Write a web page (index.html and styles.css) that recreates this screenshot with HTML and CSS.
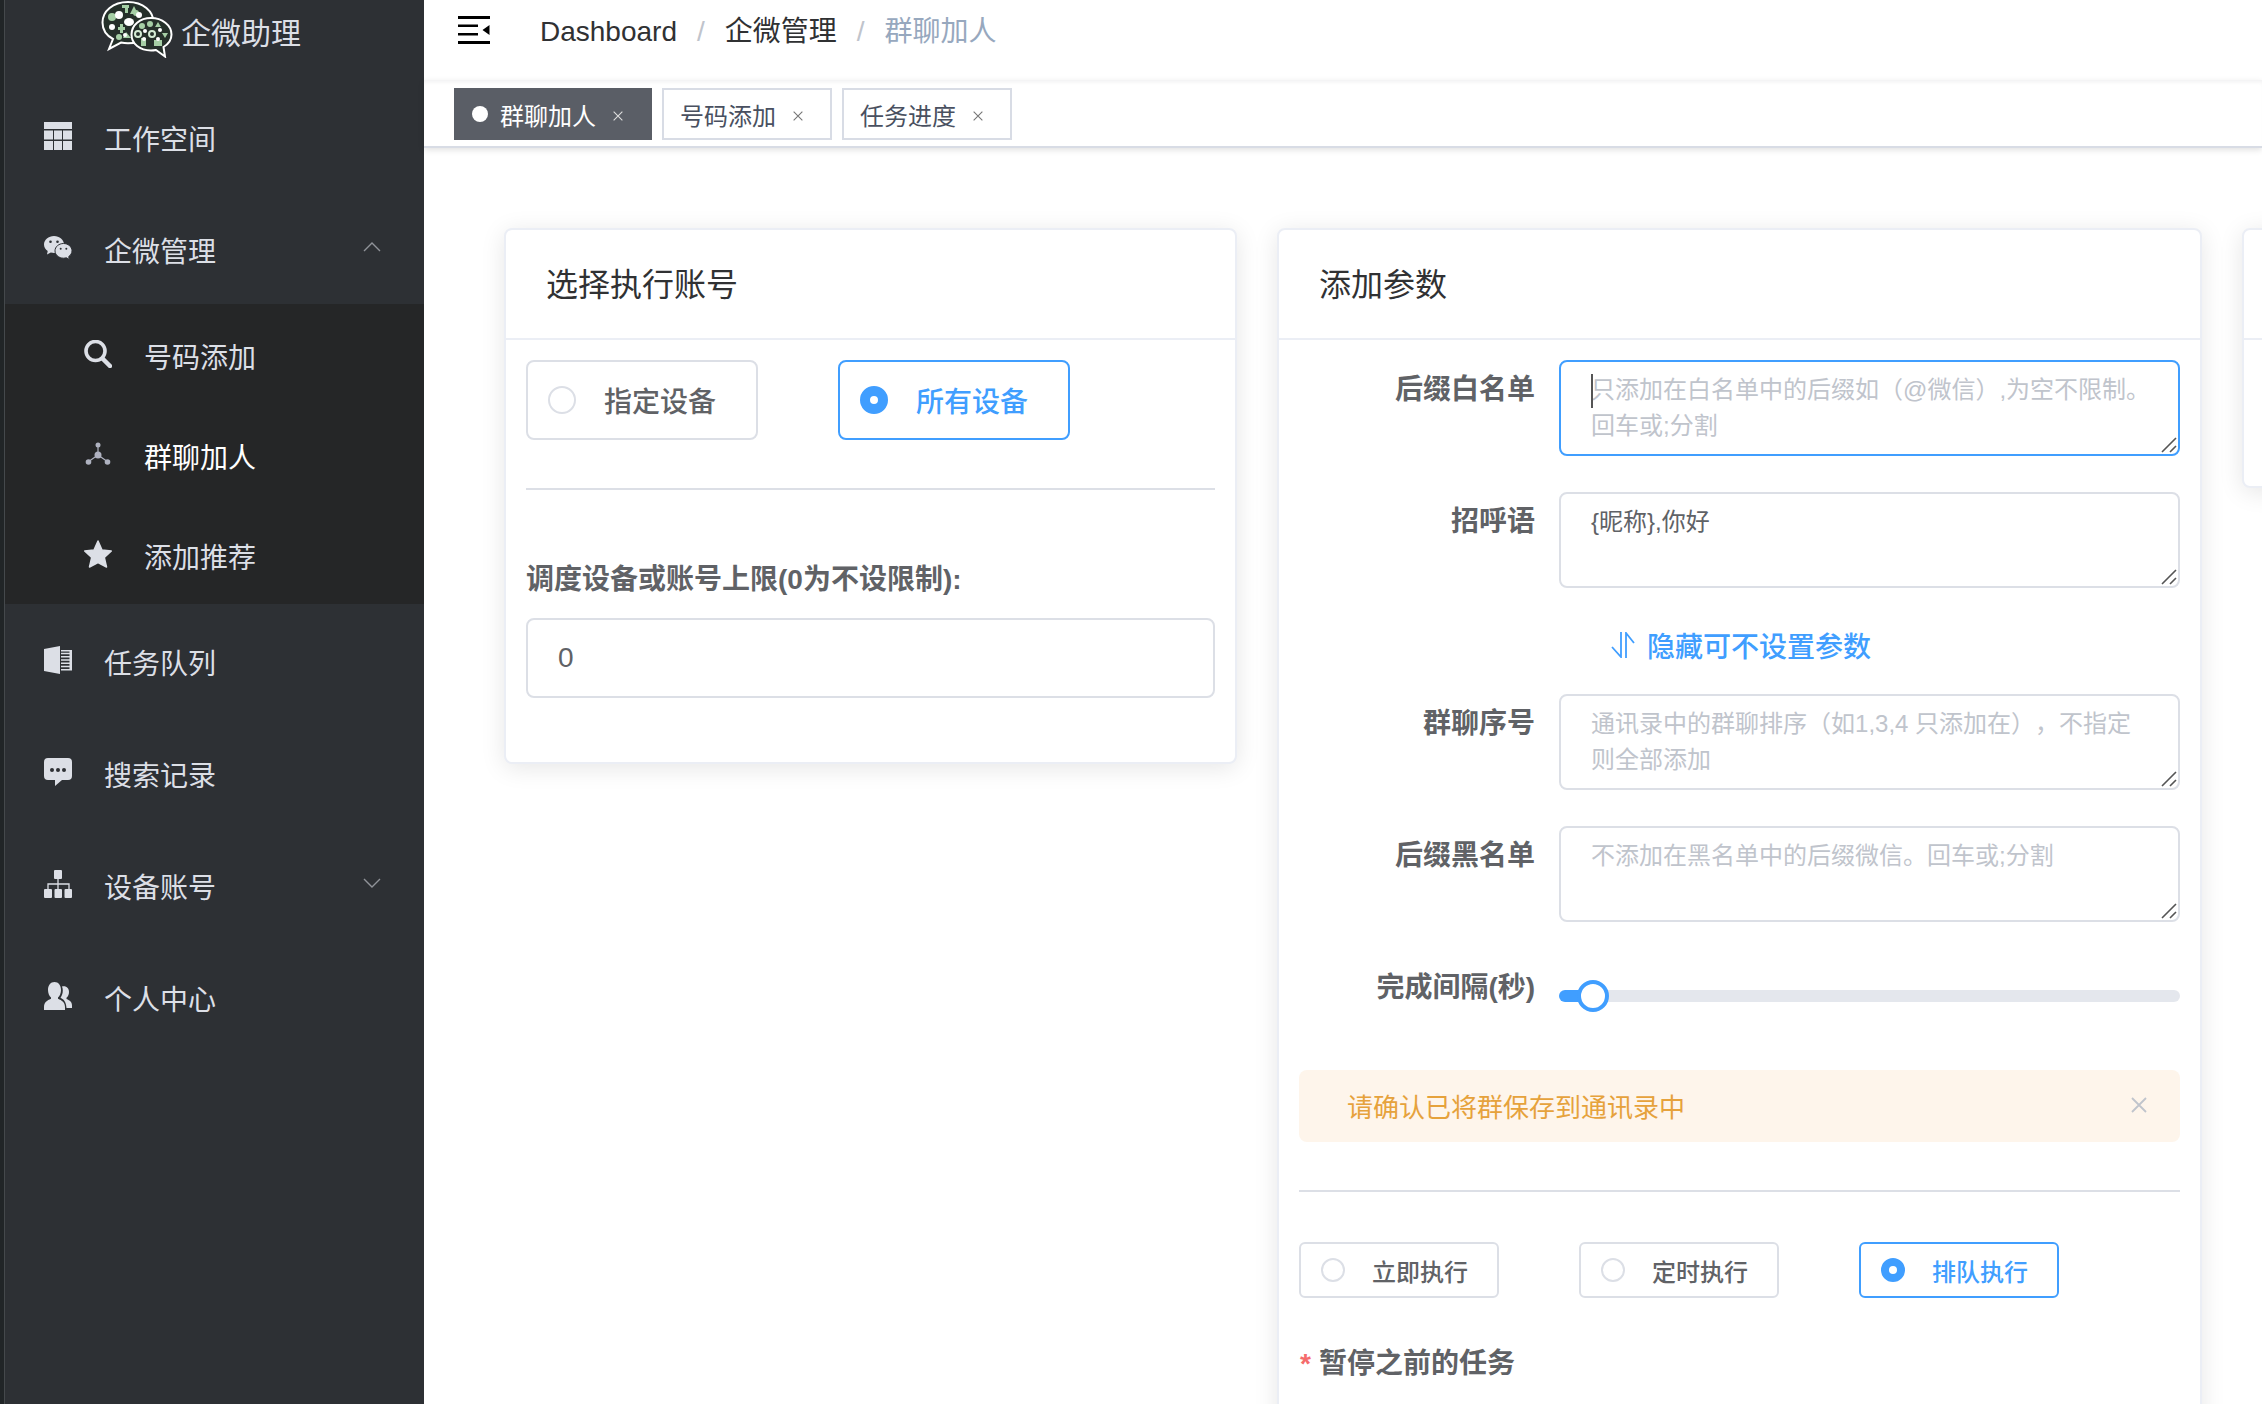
FILE: index.html
```
<!DOCTYPE html>
<html lang="zh-CN">
<head>
<meta charset="utf-8">
<meta name="viewport" content="width=device-width, initial-scale=1">
<title>群聊加人 - 企微助理</title>
<link rel="stylesheet" href="styles.css">
</head>
<body>
<svg class="sprite" width="0" height="0" aria-hidden="true">
  <symbol id="grip" viewBox="0 0 16 16"><path d="M1 15 15 1M9 15l6-6" fill="none" stroke="currentColor" stroke-width="1.6"/></symbol>
  <symbol id="cross" viewBox="0 0 16 16"><path d="M1 1l14 14M15 1 1 15" fill="none" stroke="currentColor" stroke-width="1.8"/></symbol>
  <symbol id="chevron" viewBox="0 0 18 10"><path d="M1 1l8 8 8-8" fill="none" stroke="currentColor" stroke-width="1.4"/></symbol>
</svg>
<div class="app">
  <aside class="sidebar">
    <a class="logo" href="#">
      <svg class="logo-mark" viewBox="0 0 72 58" aria-hidden="true">
        <path d="M27 2C12 2 1.500 11 1.500 22.500c0 7 4 13 10.500 16.500L8 49l12-6.500c2 .5 5 .8 7 .8 15 0 25.500-9.300 25.500-20.800S42 2 27 2z" fill="#25302a" stroke="#fff" stroke-width="2"/>
        <g fill="#a5cfa5"><rect x="21" y="5" width="7" height="3"/><rect x="24" y="5" width="3" height="8"/><path d="M33 6l4 8h-8z"/><circle cx="11" cy="17" r="4"/><circle cx="35" cy="13" r="3"/><rect x="17" y="27" width="7" height="3"/><rect x="19" y="24" width="3" height="9"/><circle cx="18" cy="37" r="3"/><path d="M25 32l5 6h-8z"/></g>
        <g fill="#fff"><circle cx="18" cy="15" r="4"/><circle cx="38" cy="15" r="3"/><ellipse cx="28" cy="22" rx="5" ry="4"/><circle cx="11" cy="27" r="3"/><circle cx="24" cy="35" r="2"/></g>
        <path d="M50 18c-11 0-19.500 7-19.500 16.500S39 50.500 50 50.500c1.500 0 3.500-.2 5-.5l9 6.500-1.500-9.500c5-3 8-7.500 8-12.500C70.500 25 61 18 50 18z" fill="#25302a" stroke="#fff" stroke-width="2"/>
        <g fill="#a5cfa5"><circle cx="41" cy="26" r="3"/><circle cx="49" cy="24" r="3"/><path d="M57 22l3 5h-6z"/><rect x="40" y="38" width="5" height="8"/><rect x="53" y="40" width="8" height="6"/><path d="M61 33h6l-3 5z"/></g>
        <g fill="none" stroke="#d4ebd4" stroke-width="2"><circle cx="37" cy="34" r="3"/><circle cx="51" cy="34" r="3"/></g>
        <g fill="#fff"><circle cx="44" cy="31" r="2"/><circle cx="59" cy="30" r="2"/><circle cx="43" cy="39" r="2"/><circle cx="57" cy="39" r="2"/></g>
      </svg>
      <span>企微助理</span>
    </a>
    <nav>
      <ul class="menu">
        <li><a class="menu-item" href="#">
          <svg class="icon" viewBox="0 0 28 28" fill="currentColor"><path d="M0 0h28v7H0zM0 8.500h9v9H0zM10 8.500h8v9h-8zM19 8.500h9v9h-9zM0 19h9v9H0zM10 19h8v9h-8zM19 19h9v9h-9z"/></svg>
          <span>工作空间</span></a></li>
        <li><a class="menu-item" href="#">
          <svg class="icon" viewBox="0 0 28 28"><path d="M10 2C4.500 2 0 5.700 0 10.500c0 2.700 1.500 5 3.700 6.500L3 20.500l3.800-2c1 .3 2.200.5 3.200.5 5.500 0 10-3.800 10-8.500S15.500 2 10 2z" fill="currentColor"/><path d="M19.500 9.500c-4.700 0-8.500 3.300-8.500 7.300s3.800 7.400 8.500 7.400c1 0 2-.2 2.900-.4l3 1.700-.7-2.900c2-1.400 3.300-3.400 3.300-5.800 0-4-3.800-7.300-8.500-7.300z" fill="currentColor" stroke="#2d3034"/><g fill="#2d3034"><circle cx="6.500" cy="7.700" r="1.300"/><circle cx="13.500" cy="7.700" r="1.300"/><circle cx="16.700" cy="14.700" r="1"/><circle cx="22.300" cy="14.700" r="1"/></g></svg>
          <span>企微管理</span>
          <svg class="arrow arrow-up"><use href="#chevron"/></svg></a>
          <ul class="submenu">
            <li><a class="menu-item" href="#">
              <svg class="icon" viewBox="0 0 28 28" fill="none" stroke="currentColor"><circle cx="11.500" cy="11" r="9.500" stroke-width="3.600"/><path d="M18.500 18.500l7.500 7.500" stroke-width="4.500" stroke-linecap="round"/></svg>
              <span>号码添加</span></a></li>
            <li><a class="menu-item active" href="#" aria-current="page">
              <svg class="icon" viewBox="0 0 28 28" fill="#afb2c0" stroke="#afb2c0"><path d="M14 5v10L4 22M14 15l10 7" fill="none" stroke-width="1.200"/><g stroke="none"><circle cx="14" cy="5" r="2.500"/><circle cx="14" cy="15" r="3.500"/><circle cx="4.500" cy="22" r="2.800"/><circle cx="23.500" cy="22" r="2.800"/></g></svg>
              <span>群聊加人</span></a></li>
            <li><a class="menu-item" href="#">
              <svg class="icon" viewBox="0 0 28 28" fill="currentColor" stroke="currentColor" stroke-width="1.500" stroke-linejoin="round"><path d="M14 1l4 9 9.300 1-7 6.500 2.200 9.500-8.500-4.500L5.500 27l2.200-9.500-7-6.500 9.300-1z"/></svg>
              <span>添加推荐</span></a></li>
          </ul></li>
        <li><a class="menu-item" href="#">
          <svg class="icon" viewBox="0 0 28 28" fill="currentColor"><path d="M0 3l16-3v28L0 25zM17 4h11v20.500H17v-1.500h8.500v-1.800H17v-1.500h8.500V18H17v-1.500h8.500v-1.700H17v-1.500h8.500v-1.800H17V10h8.500V8.300H17V6.800h8.500V5.500H17z"/></svg>
          <span>任务队列</span></a></li>
        <li><a class="menu-item" href="#">
          <svg class="icon" viewBox="0 0 28 28"><path d="M4 0h20a4 4 0 0 1 4 4v14a4 4 0 0 1-4 4h-6l-7 6v-6H4a4 4 0 0 1-4-4V4a4 4 0 0 1 4-4z" fill="currentColor"/><g fill="#2d3034"><circle cx="8" cy="12" r="2"/><circle cx="14" cy="12" r="2"/><circle cx="20" cy="12" r="2"/></g></svg>
          <span>搜索记录</span></a></li>
        <li><a class="menu-item" href="#">
          <svg class="icon" viewBox="0 0 28 28"><path d="M14 8v12M4 20v-6h21v6" fill="none" stroke="currentColor" stroke-width="1.300"/><g fill="currentColor"><rect x="10" width="8" height="9" rx="1"/><rect y="19" width="8" height="9" rx="1"/><rect x="10.500" y="19" width="7.500" height="9" rx="1"/><rect x="20.500" y="19" width="7.500" height="9" rx="1"/></g></svg>
          <span>设备账号</span>
          <svg class="arrow"><use href="#chevron"/></svg></a></li>
        <li><a class="menu-item" href="#">
          <svg class="icon" viewBox="0 0 28 28" fill="currentColor"><path d="M10.500 0C6.500 0 4 3.500 4 8c0 3.300 1.300 6 3 7.500v1.300C3 18.500 0 20.500 0 25v3h21v-3c0-4.500-3-6.500-7-8.200v-1.300c1.700-1.500 3-4.200 3-7.500 0-4.500-2.500-8-6.500-8z"/><path d="M18 4.500c.6 1.200.8 2.500.8 4 0 3-1 5.500-2.300 7.300 3.500 1.700 5.500 4 6 10.200H28v-2.500c0-3.500-2-5-5.500-6.500v-1.300c1.600-1.300 2.500-3 2.500-5.700 0-3.500-2.500-6.500-7-5.500z"/></svg>
          <span>个人中心</span></a></li>
      </ul>
    </nav>
  </aside>

  <div class="page">
    <header class="navbar">
      <button class="toggle" type="button" aria-label="收起菜单">
        <svg viewBox="0 0 32 28" fill="#000" aria-hidden="true"><path d="M0 0h32v3H0zM0 8.500h20v2.500H0zM0 17h20v2.500H0zM0 25h32v3H0zM31.500 9v10l-7-5z"/></svg>
      </button>
      <nav class="breadcrumb">
        <a href="#">Dashboard</a><span class="slash">/</span><a href="#">企微管理</a><span class="slash">/</span><span class="current">群聊加人</span>
      </nav>
    </header>
    <nav class="tags">
      <a class="tag tag-active" href="#">群聊加人<svg class="tag-close"><use href="#cross"/></svg></a>
      <a class="tag" href="#">号码添加<svg class="tag-close"><use href="#cross"/></svg></a>
      <a class="tag" href="#">任务进度<svg class="tag-close"><use href="#cross"/></svg></a>
    </nav>

    <main class="cards">
      <section class="card">
        <h2 class="card-title">选择执行账号</h2>
        <div class="card-body">
          <div class="radios">
            <label class="radio"><input type="radio" name="device"><span>指定设备</span></label>
            <label class="radio"><input type="radio" name="device" checked><span>所有设备</span></label>
          </div>
          <hr class="rule">
          <label class="limit-label" for="limit">调度设备或账号上限(0为不设限制):</label>
          <input class="text-input" id="limit" type="text" value="0">
        </div>
      </section>

      <section class="card card-tall">
        <h2 class="card-title">添加参数</h2>
        <form class="card-body">
          <div class="row">
            <label class="row-label" for="white">后缀白名单</label>
            <div class="field"><textarea class="area focused" id="white" placeholder="只添加在白名单中的后缀如（@微信）,为空不限制。回车或;分割"></textarea><span class="caret"></span><svg class="grip"><use href="#grip"/></svg></div>
          </div>
          <div class="row">
            <label class="row-label" for="greet">招呼语</label>
            <div class="field"><textarea class="area" id="greet">{昵称},你好</textarea><svg class="grip"><use href="#grip"/></svg></div>
          </div>
          <button class="fold" type="button">
            <svg viewBox="0 0 24 26" aria-hidden="true"><path d="M10 0v25L1 15M15 26V1l8 10" fill="none" stroke="currentColor" stroke-width="1.800"/></svg>隐藏可不设置参数</button>
          <div class="row">
            <label class="row-label" for="order">群聊序号</label>
            <div class="field"><textarea class="area" id="order" placeholder="通讯录中的群聊排序（如1,3,4 只添加在），不指定则全部添加"></textarea><svg class="grip"><use href="#grip"/></svg></div>
          </div>
          <div class="row">
            <label class="row-label" for="black">后缀黑名单</label>
            <div class="field"><textarea class="area" id="black" placeholder="不添加在黑名单中的后缀微信。回车或;分割"></textarea><svg class="grip"><use href="#grip"/></svg></div>
          </div>
          <div class="row">
            <label class="row-label" for="gap">完成间隔(秒)</label>
            <div class="field"><input class="slider" id="gap" type="range" min="0" max="100" value="3"></div>
          </div>
          <div class="alert" role="alert">
            <span>请确认已将群保存到通讯录中</span>
            <button class="alert-close" type="button" aria-label="关闭"><svg><use href="#cross"/></svg></button>
          </div>
          <hr class="rule">
          <div class="radios">
            <label class="radio radio-small"><input type="radio" name="run"><span>立即执行</span></label>
            <label class="radio radio-small"><input type="radio" name="run"><span>定时执行</span></label>
            <label class="radio radio-small"><input type="radio" name="run" checked><span>排队执行</span></label>
          </div>
          <p class="required">暂停之前的任务</p>
        </form>
      </section>

      <section class="card card-short">
        <div class="card-title"></div>
        <div class="card-body"></div>
      </section>
    </main>
  </div>
</div>
</body>
</html>
```
FILE: styles.css
```
* { box-sizing: border-box; }

body {
  margin: 0;
  background: #fff;
  color: #606266;
  font-family: "Liberation Sans", "Noto Sans CJK SC", sans-serif;
  font-size: 28px;
  text-spacing-trim: space-all;
}

a { color: inherit; text-decoration: none; }
ul { margin: 0; padding: 0; list-style: none; }
button { padding: 0; border: 0; background: none; color: inherit; font: inherit; cursor: pointer; }
textarea, input { font-family: inherit; }
.sprite { position: absolute; }

.app { display: flex; height: 100vh; overflow: hidden; }

/* Sidebar */
.sidebar {
  flex: 0 0 424px;
  border-left: 4px solid #212527;
  box-shadow: inset 1px 0 #45494c;
  background: #2d3034;
  color: #dcdfe6;
}
.logo {
  display: flex;
  gap: 8px;
  height: 80px;
  padding-left: 97px;
  font-size: 30px;
  line-height: 68px;
}
.logo-mark { width: 72px; height: 58px; }
.menu-item {
  display: flex;
  align-items: center;
  height: 112px;
  padding: 0 43px 0 40px;
}
.icon { flex: none; width: 28px; height: 28px; }
.menu-item span { margin-left: 32px; padding-top: 4px; }
.arrow { width: 18px; height: 10px; margin: 0 0 3px auto; color: #909399; }
.arrow-up { transform: rotate(180deg); }
.submenu { margin-left: 1px; background: #252627; }
.submenu .menu-item { height: 100px; padding-left: 79px; }
.menu-item.active { color: #fff; }

/* Top bars */
.page { flex: 1; min-width: 0; }
.navbar {
  display: flex;
  height: 80px;
  padding: 16px 34px;
}
.toggle { width: 32px; height: 28px; }
.toggle svg { display: block; width: 32px; height: 28px; }
.breadcrumb {
  display: flex;
  gap: 20px;
  margin-left: 50px;
  color: #303133;
  line-height: 32px;
}
.slash { color: #c0c4cc; }
.current { color: #97a8be; }
.tags {
  display: flex;
  gap: 10px;
  height: 68px;
  padding: 8px 30px;
  border-bottom: 2px solid #d8dce5;
  box-shadow: 0 2px 6px rgba(0, 0, 0, .12), inset 0 4px 4px -2px rgba(0, 21, 41, .06);
}
.tag {
  display: flex;
  align-items: center;
  height: 52px;
  padding: 0 27px 0 16px;
  border: 2px solid #d8dce5;
  color: #495060;
  font-size: 24px;
}
.tag-close { width: 10px; height: 10px; margin: 4px 0 0 17px; color: #777; }
.tag-active { border-color: #5a5e66; background: #5a5e66; color: #fff; }
.tag-active .tag-close { color: #ddd; }
.tag-active::before {
  width: 16px;
  height: 16px;
  margin-right: 12px;
  border-radius: 50%;
  background: #fff;
  content: "";
}

/* Cards */
.cards {
  display: grid;
  grid-template-columns: 41.7% 52.6% 41.7%;
  align-items: start;
  gap: 40px;
  margin-left: 80px;
  padding-top: 80px;
}
.card {
  border: 2px solid #ebeef5;
  border-radius: 8px;
  background: #fff;
  box-shadow: 0 4px 24px rgba(0, 0, 0, .1);
}
.card-title {
  height: 110px;
  margin: 0;
  padding: 0 40px;
  border-bottom: 2px solid #ebeef5;
  color: #303133;
  font-size: 32px;
  font-weight: 400;
  line-height: 110px;
}
.card-body { padding: 20px 20px 64px; }
.card-tall .card-body { padding-bottom: 200px; }

.radios { display: flex; gap: 80px; }
.radio {
  display: flex;
  align-items: center;
  height: 80px;
  padding: 0 40px 0 20px;
  border: 2px solid #dcdfe6;
  border-radius: 8px;
  font-weight: 500;
  white-space: nowrap;
}
.radio input {
  appearance: none;
  flex: none;
  width: 28px;
  height: 28px;
  margin: 0 28px 0 0;
  border: 2px solid #dcdfe6;
  border-radius: 50%;
}
.radio:has(:checked) { border-color: #409eff; color: #409eff; }
.radio input:checked { border: 10px solid #409eff; }
.radio-small { height: 56px; padding-right: 29px; border-radius: 6px; font-size: 24px; }
.radio-small input { width: 24px; height: 24px; margin-right: 27px; }
.radio-small input:checked { border-width: 8px; }

.rule { height: 2px; margin: 48px 0 50px; border: 0; background: #dcdfe6; }
.limit-label { display: block; margin-top: 70px; font-weight: 700; line-height: 40px; }
.text-input {
  display: block;
  width: 100%;
  height: 80px;
  margin-top: 18px;
  padding: 0 30px;
  border: 2px solid #dcdfe6;
  border-radius: 8px;
  color: #606266;
  font-size: 28px;
}

/* Form rows */
.row { display: flex; gap: 24px; margin-bottom: 36px; }
.row-label {
  flex: 0 0 236px;
  font-weight: 700;
  line-height: 60px;
  text-align: right;
}
.field { position: relative; flex: 1; min-width: 0; }
.area {
  display: block;
  width: 100%;
  height: 96px;
  padding: 10px 26px 10px 30px;
  border: 2px solid #dcdfe6;
  border-radius: 8px;
  outline: 0;
  color: #606266;
  font-size: 24px;
  line-height: 36px;
  overflow: hidden;
  resize: none;
  text-spacing-trim: space-all;
}
.area::placeholder { color: #c0c4cc; }
.area.focused { border-color: #409eff; }
.caret { position: absolute; top: 14px; left: 32px; width: 2px; height: 34px; background: #555; }
.grip { position: absolute; right: 3px; bottom: 3px; width: 16px; height: 16px; color: #555; }
.fold {
  display: flex;
  align-items: center;
  gap: 12px;
  height: 42px;
  margin: 0 0 28px 312px;
  color: #409eff;
  font-weight: 500;
}
.fold svg { width: 24px; height: 26px; }

.slider {
  appearance: none;
  display: block;
  width: 100%;
  height: 12px;
  margin: 32px 0 0;
  border-radius: 6px;
  background: linear-gradient(to right, #409eff 32px, #e4e7ed 32px);
}
.slider::-webkit-slider-thumb {
  appearance: none;
  width: 32px;
  height: 32px;
  border: 4px solid #409eff;
  border-radius: 50%;
  background: #fff;
}

.alert {
  display: flex;
  align-items: center;
  justify-content: space-between;
  height: 72px;
  margin-top: 52px;
  padding: 0 33px 2px 48px;
  border-radius: 8px;
  background: #fef5eb;
  color: #e6a23c;
  font-size: 26px;
}
.alert-close { width: 16px; height: 16px; color: #c0c4cc; }
.alert-close svg { display: block; width: 16px; height: 16px; }
.required { margin: 46px 0 0; padding-left: 1px; font-weight: 700; line-height: 40px; }
.required::before { margin-right: 8px; color: #f56c6c; content: "*"; }

.card-short .card-body { padding: 73px; }
```
